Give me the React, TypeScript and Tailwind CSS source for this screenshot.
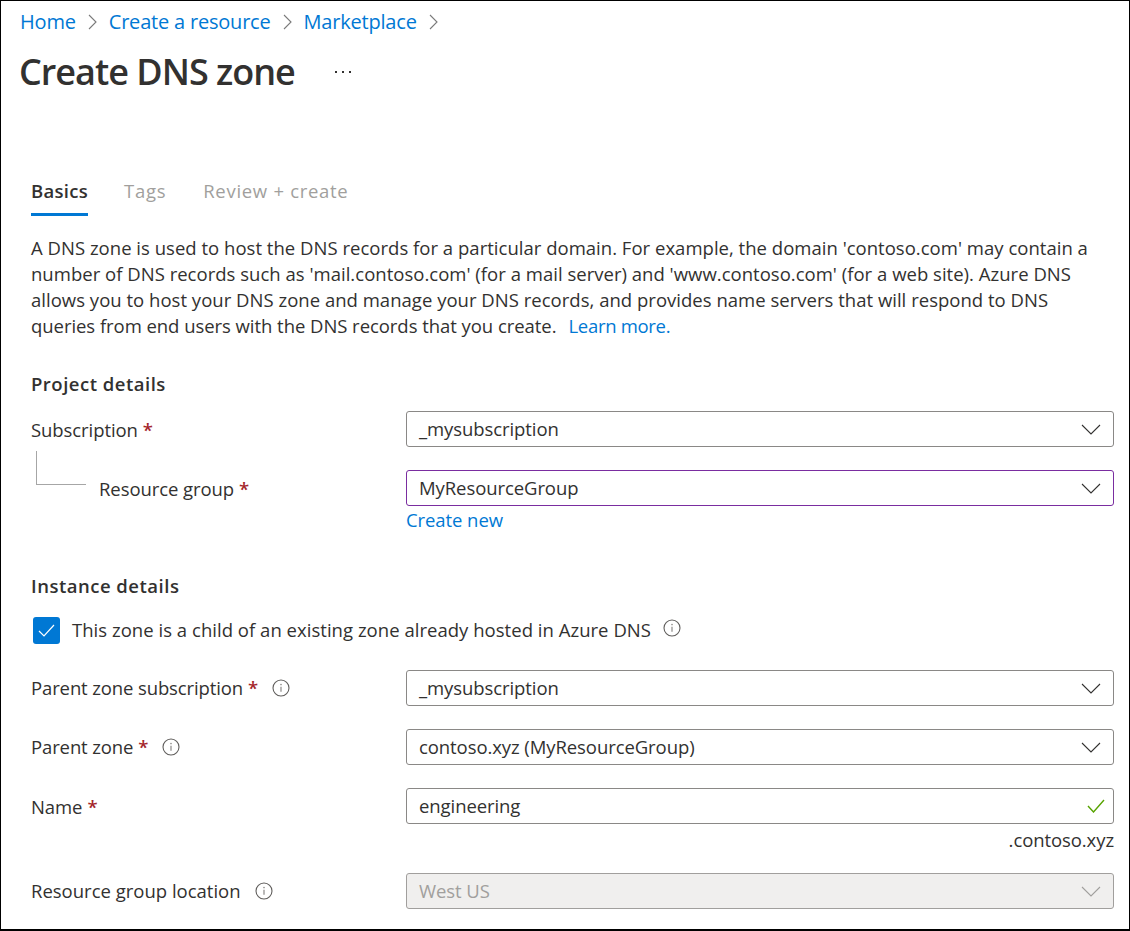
import type { ReactNode } from "react";

function Star() {
  return <span className="ml-[5px] font-semibold text-[#a4262c]">*</span>;
}

function Info({ className = "" }: { className?: string }) {
  return (
    <svg width="18" height="18" viewBox="0 0 18 18" fill="none" className={className}>
      <circle cx="9" cy="9" r="8" stroke="#605e5c" strokeWidth="1.1" />
      <path d="M9 7.8v5" stroke="#8a8886" strokeWidth="1.2" />
      <circle cx="9" cy="5.6" r="0.8" fill="#8a8886" />
    </svg>
  );
}

function Chevron({ color = "#323130" }: { color?: string }) {
  return (
    <svg width="20" height="11" viewBox="0 0 20 11" fill="none">
      <path d="M1 1l9 9 9-9" stroke={color} strokeWidth="1.1" />
    </svg>
  );
}

function Crumb({ label }: { label: string }) {
  return (
    <>
      <a className="text-[#0078d4]">{label}</a>
      <svg width="9" height="16" viewBox="0 0 9 16" fill="none" className="mx-[12px]">
        <path d="M1 1l7 7-7 7" stroke="#7a7a7a" strokeWidth="1.1" />
      </svg>
    </>
  );
}

function Field({
  value,
  border = "border-[#8a8886]",
  disabled = false,
  icon,
}: {
  value: string;
  border?: string;
  disabled?: boolean;
  icon?: ReactNode;
}) {
  return (
    <div
      className={`flex h-[36px] w-[708px] items-center justify-between rounded-[3px] border pl-[12px] pr-[12px] ${border} ${
        disabled ? "bg-[#f0efee] text-[#a19f9d]" : "bg-white"
      }`}
    >
      <span>{value}</span>
      {icon ?? <Chevron color={disabled ? "#a19f9d" : "#323130"} />}
    </div>
  );
}

function Row({ label, field, className = "" }: { label: ReactNode; field: ReactNode; className?: string }) {
  return (
    <div className={`flex items-center ${className}`}>
      <div className="flex w-[375px] items-center">{label}</div>
      {field}
    </div>
  );
}

export default function App() {
  return (
    <div
      className="h-[931px] w-[1130px] overflow-hidden border border-b-2 border-black bg-white pl-[30px] text-[18.5px] leading-[26px] tracking-[-0.08px] text-[#323130]"
      style={{ fontFamily: '"Open Sans", sans-serif' }}
    >
      {/* header */}
      <nav className="-ml-[11px] mt-[9px] flex h-[22px] items-center pt-[1px] text-[20px] tracking-[-0.2px]">
        <Crumb label="Home" />
        <Crumb label="Create a resource" />
        <Crumb label="Marketplace" />
      </nav>
      <div className="-ml-[12px] mt-[16px] flex h-[48px] items-center">
        <h1 className="text-[36px] font-semibold leading-[48px] tracking-[-1px]">Create DNS zone</h1>
        <span className="ml-[40px] flex gap-[5px]">
          <i className="h-[2px] w-[2px] bg-[#323130]" />
          <i className="h-[2px] w-[2px] bg-[#323130]" />
          <i className="h-[2px] w-[2px] bg-[#323130]" />
        </span>
      </div>

      {/* tabs */}
      <div className="mt-[77px] flex h-[43px] items-start tracking-[0.7px] text-[#a19f9d]">
        <div className="flex h-[43px] flex-col justify-between">
          <span className="pt-[5px] font-semibold tracking-[0.3px] text-[#323130]">Basics</span>
          <div className="h-[3px] bg-[#0078d4]" />
        </div>
        <span className="ml-[36px] pt-[5px]">Tags</span>
        <span className="ml-[37px] pt-[5px]">Review + create</span>
      </div>

      <p className="mt-[19px] whitespace-nowrap tracking-[0.02px]">
        A DNS zone is used to host the DNS records for a particular domain. For example, the domain 'contoso.com' may contain a
        <br />
        number of DNS records such as 'mail.contoso.com' (for a mail server) and 'www.contoso.com' (for a web site). Azure DNS
        <br />
        allows you to host your DNS zone and manage your DNS records, and provides name servers that will respond to DNS
        <br />
        <span className="tracking-[-0.05px]">queries from end users with the DNS records that you create.</span>
        <a className="ml-[12px] tracking-[-0.3px] text-[#0078d4]">Learn more.</a>
      </p>

      {/* project details */}
      <h2 className="mt-[32px] font-semibold tracking-[0.5px]">Project details</h2>
      <Row
        className="mt-[14px]"
        label={
          <span className="pt-[1px]">
            Subscription
            <Star />
          </span>
        }
        field={<Field value="_mysubscription" />}
      />
      <Row
        className="mt-[23px]"
        label={
          <div className="relative pl-[68px] pt-[1px]">
            <div className="absolute -top-[24px] left-[5px] h-[34px] w-[50px] border-b border-l border-[#a6a6a6]" />
            Resource group
            <Star />
          </div>
        }
        field={<Field value="MyResourceGroup" border="border-[#7a2da0]" />}
      />
      <a className="ml-[375px] mt-[1px] block text-[#0078d4]">Create new</a>

      {/* instance details */}
      <h2 className="mt-[40px] font-semibold tracking-[0.5px]">Instance details</h2>
      <div className="mt-[17px] flex h-[28px] items-center pl-[2px]">
        <div className="flex h-[27px] w-[27px] items-center justify-center rounded-[3px] bg-[#0078d4]">
          <svg width="17" height="13" viewBox="0 0 17 13" fill="none">
            <path d="M1 7l5 5L16 1" stroke="white" strokeWidth="1.2" />
          </svg>
        </div>
        <span className="ml-[12px] tracking-[0.03px]">This zone is a child of an existing zone already hosted in Azure DNS</span>
        <Info className="-mt-[4px] ml-[12px]" />
      </div>

      <Row
        className="mt-[26px]"
        label={
          <>
            <span className="tracking-[-0.12px]">Parent zone subscription</span>
            <Star />
            <Info className="ml-[14px]" />
          </>
        }
        field={<Field value="_mysubscription" />}
      />
      <Row
        className="mt-[23px]"
        label={
          <>
            <span className="tracking-[-0.12px]">Parent zone</span>
            <Star />
            <Info className="ml-[14px]" />
          </>
        }
        field={<Field value="contoso.xyz (MyResourceGroup)" />}
      />
      <Row
        className="mt-[23px]"
        label={
          <span className="pt-[1px]">
            Name
            <Star />
          </span>
        }
        field={
          <Field
            value="engineering"
            icon={
              <svg width="18" height="14" viewBox="0 0 18 14" fill="none" className="-mr-[4px]">
                <path d="M1 7l5.5 6L17 1" stroke="#57a300" strokeWidth="1.4" />
              </svg>
            }
          />
        }
      />
      <div className="mt-[3px] w-[1083px] text-right">.contoso.xyz</div>
      <Row
        className="mt-[20px]"
        label={
          <>
            <span className="tracking-[0px]">Resource group location</span>
            <Info className="ml-[14px]" />
          </>
        }
        field={<Field value="West US" disabled border="border-[#a19f9d]" />}
      />
    </div>
  );
}
